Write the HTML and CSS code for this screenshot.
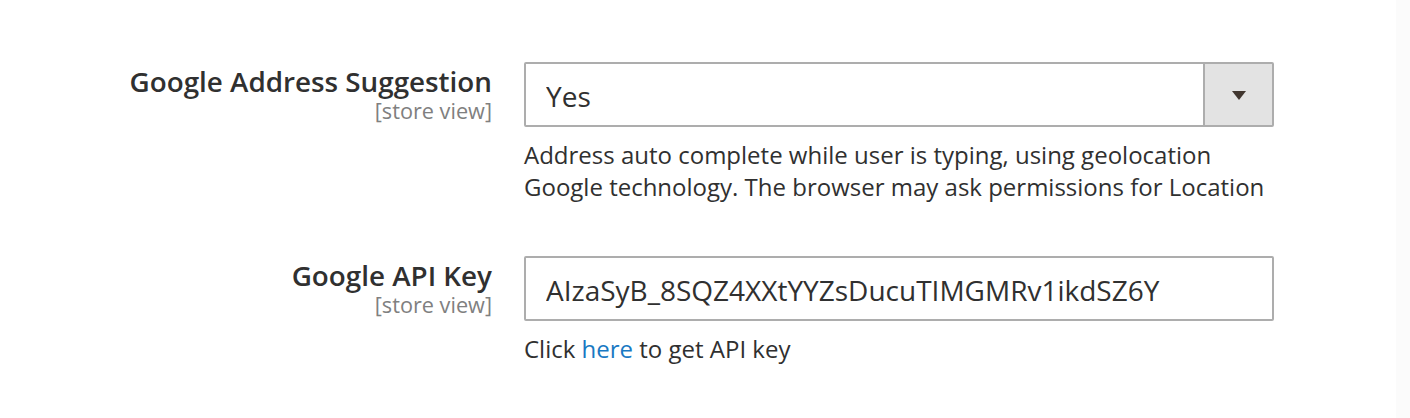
FILE: index.html
```html
<!DOCTYPE html>
<html lang="en">
<head>
    <meta charset="UTF-8">
    <title>Google Address Suggestion</title>
    <link rel="stylesheet" href="styles.css">
</head>
<body>
<div class="page">
    <div class="config">
        <div class="field">
            <div class="field-label">
                <label for="addressSuggest">Google Address Suggestion</label>
                <span class="scope">[store view]</span>
            </div>
            <div class="field-control">
                <div class="select-box">
                    <select id="addressSuggest">
                        <option selected>Yes</option>
                        <option>No</option>
                    </select>
                    <span class="select-btn"><span class="arrow"></span></span>
                </div>
                <p class="note">Address auto complete while user is typing, using geolocation Google technology. The browser may ask permissions for Location</p>
            </div>
        </div>
        <div class="field">
            <div class="field-label">
                <label for="apiKey">Google API Key</label>
                <span class="scope">[store view]</span>
            </div>
            <div class="field-control">
                <input type="text" id="apiKey" class="text-input" value="AIzaSyB_8SQZ4XXtYYZsDucuTIMGMRv1ikdSZ6Y">
                <p class="note">Click <a href="#">here</a> to get API key</p>
            </div>
        </div>
    </div>
    <div class="side-strip"></div>
</div>
</body>
</html>
```

FILE: styles.css
```css
/*reset*/
body,p,select,input{
    padding: 0;
    margin: 0;
}
/*public*/
body{
    font-family: "Open Sans","Liberation Sans",Arial,sans-serif;
    color: #303030;
    background: #fff;
}
.page{
    display: flex;
    height: 418px;
}
.config{
    flex: 1;
    padding-top: 62px;
}
.side-strip{
    width: 14px;
    background: #fbfbfb;
}
.field{
    display: flex;
    gap: 32px;
    margin-bottom: 54px;
}
.field-label{
    width: 492px;
    text-align: right;
    padding-top: 2px;
}
.field-label label{
    display: block;
    font-size: 27.8px;
    font-weight: 600;
    line-height: 34px;
}
.scope{
    display: block;
    font-size: 21.7px;
    line-height: 26px;
    color: #808080;
}
.field-control{
    width: 750px;
}
.select-box{
    display: flex;
    height: 65px;
    box-sizing: border-box;
    border: 2px solid #adadad;
    border-radius: 2px;
    background: #fff;
}
.select-box select{
    flex: 1;
    appearance: none;
    -webkit-appearance: none;
    border: 0;
    background: transparent;
    font-family: inherit;
    font-size: 28px;
    color: #303030;
    padding: 3px 20px 0;
    outline: none;
}
.select-btn{
    width: 67px;
    border-left: 2px solid #adadad;
    background: #e3e3e3;
    display: flex;
    align-items: center;
    justify-content: center;
}
.arrow{
    width: 0;
    height: 0;
    border-left: 7.5px solid transparent;
    border-right: 7.5px solid transparent;
    border-top: 9px solid #41362f;
    margin-top: 2px;
}
.text-input{
    display: block;
    width: 100%;
    height: 65px;
    box-sizing: border-box;
    border: 2px solid #adadad;
    border-radius: 2px;
    font-family: inherit;
    font-size: 28px;
    color: #303030;
    padding: 3px 20px 0;
    outline: none;
}
.note{
    margin-top: 12px;
    font-size: 24px;
    line-height: 31.5px;
    color: #303030;
}
.note a{
    color: #1979c3;
    text-decoration: none;
}
```
